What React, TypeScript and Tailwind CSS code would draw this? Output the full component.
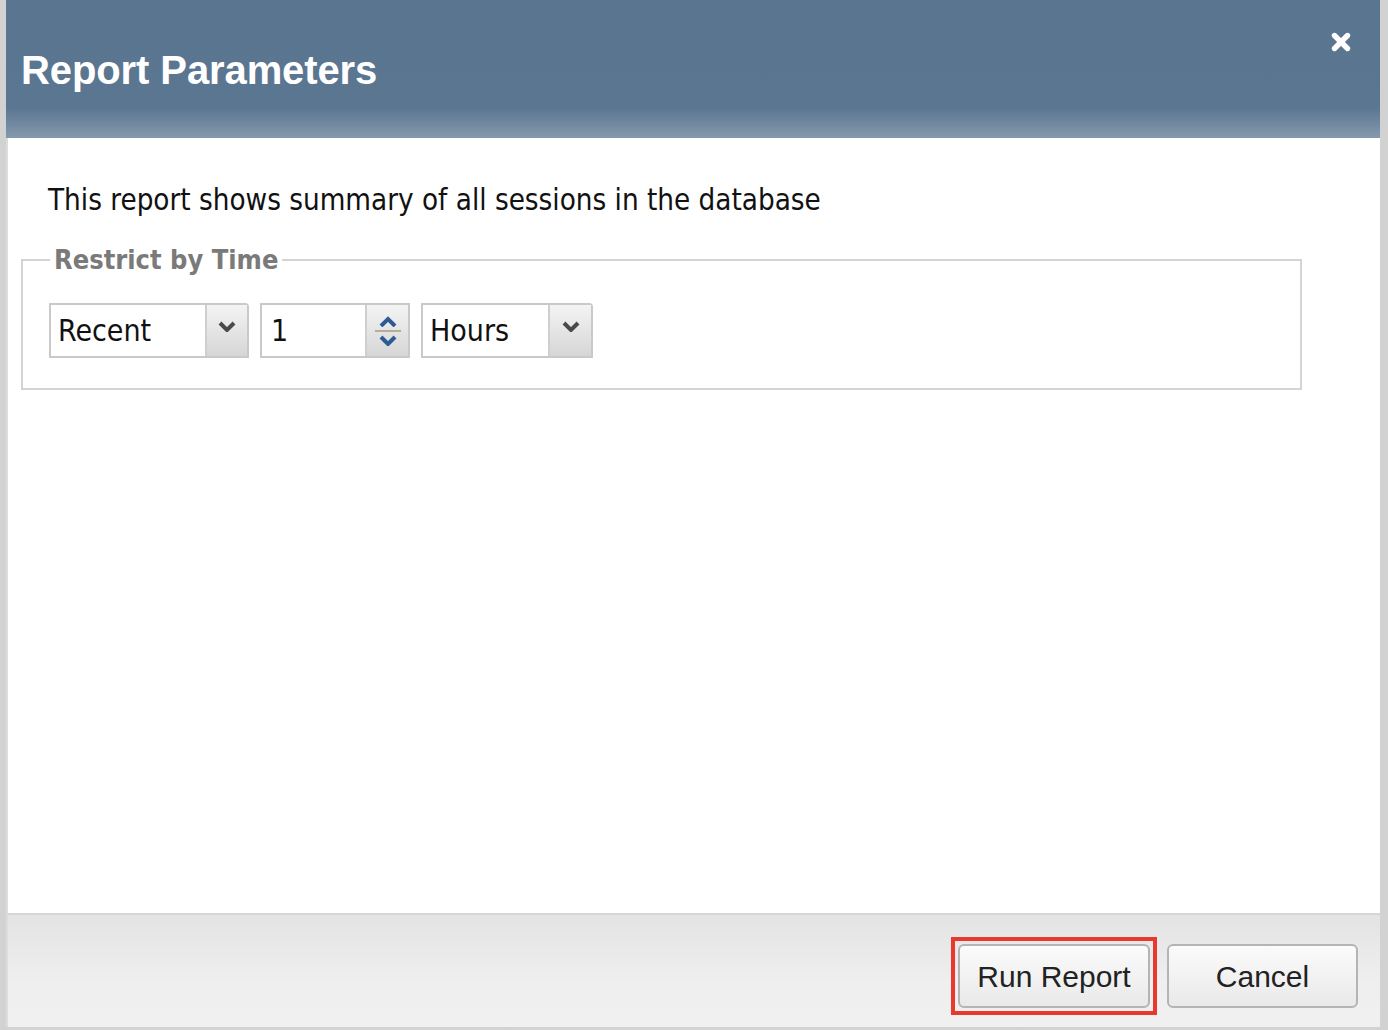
import { X } from 'lucide-react';

const sans = 'font-["Liberation_Sans",Arial,sans-serif]';
const tahoma = 'font-["DejaVu_Sans_Condensed","DejaVu_Sans",sans-serif]';

function Chevron({ up = false, color = '#4a4a4a' }: { up?: boolean; color?: string }) {
  return (
    <svg width="18" height="11" viewBox="0 0 18 11">
      <path
        d={up ? 'M2 10 L9 3 L16 10' : 'M2 2 L9 9 L16 2'}
        fill="none"
        stroke={color}
        strokeWidth="4"
        strokeLinejoin="miter"
      />
    </svg>
  );
}

function Select({ label, width, btn }: { label: string; width: string; btn: string }) {
  return (
    <div className={`flex h-[55px] ${width} border-2 border-[#c9c9c9] bg-white rounded-tr-[4px]`}>
      <div className={`flex-1 flex items-center pl-[7px] text-[30px] text-[#111] ${tahoma}`}>{label}</div>
      <div className={`${btn} flex items-start justify-center pt-[16px] border-l-2 border-[#cfcfcf] bg-[linear-gradient(to_bottom,#f4f4f4,#d6d6d6)]`}>
        <Chevron />
      </div>
    </div>
  );
}

export default function App() {
  return (
    <div className="w-[1388px] h-[1030px] bg-[#d2d2d2] flex pl-[6px] pr-[8px] pb-[3px]">
      <div className="flex-1 flex flex-col bg-white">
        {/* Header */}
        <div className="h-[138px] relative bg-[linear-gradient(to_bottom,#5a7590_0%,#5b7691_78%,#8499ad_100%)] pl-[15px] pt-[44px]">
          <h1 className={`text-[40px] leading-[52px] font-bold text-white tracking-[-0.1px] ${sans}`}>Report Parameters</h1>
          <X className="absolute right-[26px] top-[29px] w-[26px] h-[26px] text-white" strokeWidth={5} />
        </div>

        {/* Body */}
        <div className="flex-1 border-l-2 border-[#dcdcdc] pl-[13px] pr-[78px]">
          <p className={`mt-[44px] ml-[27px] text-[29.3px] leading-[36px] text-[#111] ${tahoma}`}>
            This report shows summary of all sessions in the database
          </p>
          <fieldset className="mt-[27px] border-2 border-[#d4d4d4] px-[26px] pb-[30px]">
            <legend className={`ml-[1px] px-[4px] text-[27px] leading-[30px] font-bold text-[#7a7a7a] ${tahoma}`}>Restrict by Time</legend>
            <div className="flex gap-[10px] mt-[28px]">
              <Select label="Recent" width="w-[200px]" btn="w-[42px]" />
              <div className="flex h-[55px] w-[150px] border-2 border-[#c9c9c9] bg-white ml-[1px]">
                <div className={`flex-1 flex items-center pl-[9px] text-[30px] text-[#111] ${tahoma}`}>1</div>
                <div className="w-[43px] flex flex-col items-center justify-center gap-[3px] border-l-2 border-[#cfcfcf] bg-[linear-gradient(to_bottom,#f4f4f4,#d6d6d6)]">
                  <Chevron up color="#2f5b95" />
                  <div className="w-[26px] h-[2px] bg-[#b5ad9c]" />
                  <Chevron color="#2f5b95" />
                </div>
              </div>
              <div className="ml-[1px]">
                <Select label="Hours" width="w-[172px]" btn="w-[43px]" />
              </div>
            </div>
          </fieldset>
        </div>

        {/* Footer */}
        <div className="h-[114px] border-t-2 border-[#d6d6d6] border-l-2 border-l-[#dcdcdc] bg-[linear-gradient(to_bottom,#e3e3e3,#efefef_60%,#f0f0f0)] flex items-start justify-end pr-[22px] pt-[22px] gap-[10px]">
          <div className="border-[4px] border-[#e8392c] p-[3px]">
            <button className={`w-[192px] h-[64px] rounded-[6px] border-2 border-[#b4b4b4] bg-[linear-gradient(to_bottom,#fbfbfb,#e9e9e9)] text-[30px] text-[#222] ${sans}`}>
              Run Report
            </button>
          </div>
          <button className={`mt-[7px] w-[191px] h-[64px] rounded-[6px] border-2 border-[#b4b4b4] bg-[linear-gradient(to_bottom,#fbfbfb,#e9e9e9)] text-[30px] text-[#222] ${sans}`}>
            Cancel
          </button>
        </div>
      </div>
    </div>
  );
}
